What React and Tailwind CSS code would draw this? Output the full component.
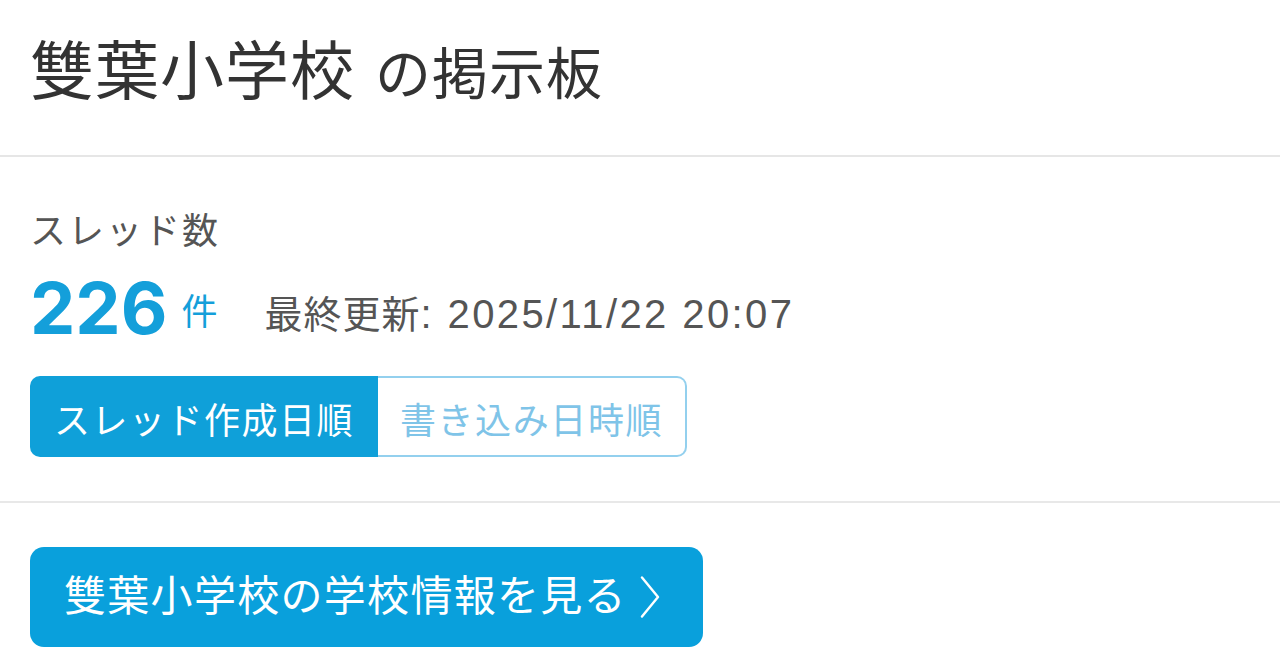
import React from "react";

const JP = { fontFamily: '"Liberation Sans", "Noto Sans CJK JP", sans-serif' };

function ChevronRight() {
  return (
    <svg width="20" height="42" viewBox="0 0 20 42" fill="none" className="ml-[13px] shrink-0">
      <path d="M2 1.5 L18 21 L2 40.5" stroke="white" strokeWidth="2.4" strokeLinecap="round" strokeLinejoin="round" />
    </svg>
  );
}

export default function App() {
  return (
    <div className="w-[1280px] h-[670px] bg-white overflow-hidden" style={JP}>
      {/* page heading */}
      <header className="h-[157px] border-b-2 border-[#e6e6e6] pl-[30px] pt-[40px]">
        <h1 className="flex items-baseline text-[#333333] font-normal leading-none">
          <span className="text-[64px] tracking-[1px]">雙葉小学校</span>
          <span className="ml-[20px] text-[56px] tracking-[1px]">の掲示板</span>
        </h1>
      </header>

      {/* thread stats and sort switch */}
      <section className="border-b-2 border-[#e8e8e8] pl-[30px] pt-[57px] pb-[44px]">
        <div className="text-[36px] leading-none tracking-[2px] text-[#555555]">スレッド数</div>

        <div className="mt-[22px] flex items-end">
          <span
            className="text-[72px] leading-none font-bold text-[#149fda]"
            style={{ fontFamily: 'Inter, "Liberation Sans", sans-serif' }}
          >
            226
          </span>
          <span className="ml-[14px] mb-[13px] text-[36px] leading-none text-[#149fda]">件</span>
          <span className="ml-[47px] mb-[10px] text-[40px] leading-none text-[#555555] whitespace-nowrap">
            <span className="text-[38px] tracking-[1px]">最終更新</span>
            <span className="tracking-[2.4px]">: 2025/11/22 20:07</span>
          </span>
        </div>

        <div className="mt-[32px] flex">
          <button className="w-[348px] h-[81px] flex items-center justify-center pt-[10px] rounded-l-[10px] bg-[#0fa0d9] text-white text-[36px] leading-none tracking-[1.5px]">
            スレッド作成日順
          </button>
          <button className="w-[309px] h-[81px] flex items-center justify-center pt-[10px] rounded-r-[10px] border-2 border-l-0 border-[#93d0ee] bg-white text-[#7fc4e8] text-[36px] leading-none tracking-[1.6px]">
            書き込み日時順
          </button>
        </div>
      </section>

      {/* link to school info */}
      <section className="pl-[30px] pt-[44px]">
        <a className="w-[673px] h-[100px] flex items-center pl-[34px] rounded-[14px] bg-[#09a0dc] text-white text-[42px] leading-none tracking-[1.3px]">
          <span>雙葉小学校の学校情報を見る</span>
          <ChevronRight />
        </a>
      </section>
    </div>
  );
}
